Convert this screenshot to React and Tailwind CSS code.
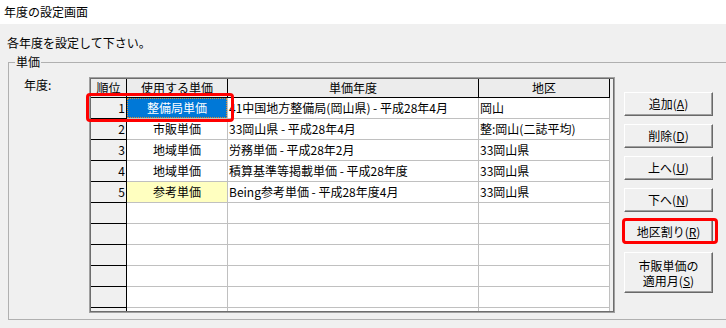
import React from "react";

const rows = [
  ["1", "整備局単価", "41中国地方整備局(岡山県) - 平成28年4月", "岡山", "sel"],
  ["2", "市販単価", "33岡山県 - 平成28年4月", "整:岡山(二誌平均)", ""],
  ["3", "地域単価", "労務単価 - 平成28年2月", "33岡山県", ""],
  ["4", "地域単価", "積算基準等掲載単価 - 平成28年度", "33岡山県", ""],
  ["5", "参考単価", "Being参考単価 - 平成28年度4月", "33岡山県", "yellow"],
  ["", "", "", "", ""],
  ["", "", "", "", ""],
  ["", "", "", "", ""],
  ["", "", "", "", ""],
  ["", "", "", "", ""],
  ["", "", "", "", ""],
];

function Btn({ children, tall }) {
  return (
    <div
      className={`w-[89px] ${tall ? "h-[41px]" : "h-[24px]"} bg-[#f0f0f0] border border-t-white border-l-white border-b-[#696969] border-r-[#696969] shadow-[inset_-1px_-1px_0_#a0a0a0] flex flex-col items-center justify-center text-center text-[12px] leading-[14px] text-black`}
    >
      {children}
    </div>
  );
}

export default function App() {
  return (
    <div
      className="relative w-[726px] h-[328px] bg-[#f0f0f0] overflow-hidden text-black"
      style={{ fontFamily: '"Noto Sans CJK JP", "Noto Sans", sans-serif' }}
    >
      <div className="h-[24px] bg-white pl-[4px] flex items-center text-[12px] leading-[14px]">
        年度の設定画面
      </div>
      <div className="pl-[7px] mt-[12px] h-[14px] text-[12px] leading-[14px]">
        各年度を設定して下さい。
      </div>
      <div className="relative ml-[8px] mt-[12px] w-[740px] h-[258px] border border-[#b0b0b0]">
        <div className="absolute left-[6px] top-[-8px] bg-[#f0f0f0] px-[1px] text-[12px] leading-[14px]">
          単価
        </div>
        <div className="flex items-start pt-[14px]">
          <div className="w-[80px] pl-[15px] pt-[1px] text-[12px] leading-[14px]">年度:</div>
          <div className="w-[526px] h-[236px] border border-[#a0a0a0]">
            <div className="w-full h-full border border-[#6d6d6d] overflow-hidden bg-[#f0f0f0]">
              <div className="flex h-[19px] text-[12px] leading-[18px] bg-[#ececec] w-[519px] border-b border-black">
                <div className="w-[36px] border-r border-black text-center">順位</div>
                <div className="w-[101px] border-r border-black text-center">使用する単価</div>
                <div className="w-[251px] border-r border-black text-center">単価年度</div>
                <div className="w-[131px] border-r border-black text-center">地区</div>
              </div>
              {rows.map((r, i) => (
                <div key={i} className="flex h-[21px] text-[12px] leading-[20px] w-[519px]">
                  <div className="w-[36px] h-[21px] border-r border-b border-black bg-[#f0f0f0] text-right pr-[1px]">
                    {r[0]}
                  </div>
                  <div
                    className={`w-[101px] h-[21px] border-r border-b border-[#c0c0c0] text-center ${
                      r[4] === "sel"
                        ? "bg-[#0078d7] text-white"
                        : r[4] === "yellow"
                        ? "bg-[#ffffc0]"
                        : "bg-white"
                    }`}
                  >
                    {r[4] === "sel" ? (
                      <div className="h-[20px] border border-dotted border-[#e08a2c] leading-[18px]">{r[1]}</div>
                    ) : (
                      r[1]
                    )}
                  </div>
                  <div className="w-[251px] h-[21px] border-r border-b border-[#c0c0c0] bg-white pl-[1px] whitespace-nowrap overflow-hidden">
                    {r[2]}
                  </div>
                  <div className="w-[131px] h-[21px] border-r border-b border-[#c0c0c0] bg-white pl-[1px] whitespace-nowrap overflow-hidden">
                    {r[3]}
                  </div>
                </div>
              ))}
            </div>
          </div>
          <div className="ml-[9px] mt-[15px] flex flex-col gap-[8px]">
            <Btn>
              <span>追加(<span className="underline">A</span>)</span>
            </Btn>
            <Btn>
              <span>削除(<span className="underline">D</span>)</span>
            </Btn>
            <Btn>
              <span>上へ(<span className="underline">U</span>)</span>
            </Btn>
            <Btn>
              <span>下へ(<span className="underline">N</span>)</span>
            </Btn>
            <Btn>
              <span>地区割り(<span className="underline">R</span>)</span>
            </Btn>
            <Btn tall>
              <div className="h-[15px] leading-[15px]">市販単価の</div>
              <div className="h-[15px] leading-[15px]">
                適用月(<span className="underline">S</span>)
              </div>
            </Btn>
          </div>
        </div>
      </div>
      <div className="absolute left-[86px] top-[93px] w-[148px] h-[29px] border-[3px] border-[#ff0000] rounded-[4px]" />
      <div className="absolute left-[622px] top-[218px] w-[96px] h-[26px] border-[3px] border-[#ff0000] rounded-[4px]" />
    </div>
  );
}
